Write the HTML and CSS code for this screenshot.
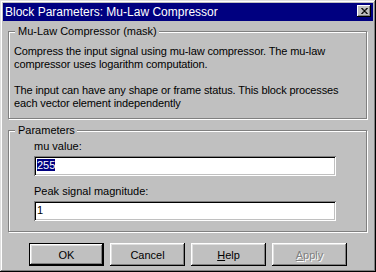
FILE: index.html
```html
<!DOCTYPE html>
<html lang="en">

<head>
    <meta charset="UTF-8">
    <title>Block Parameters: Mu-Law Compressor</title>
    <link rel="stylesheet" href="styles.css">
</head>

<body>

    <div class="window">

        <div class="titlebar">
            <span class="title">Block Parameters: Mu-Law Compressor</span>
            <span class="close-btn">
                <svg width="8" height="7" viewBox="0 0 8 7">
                    <path d="M0 0h2v1h1v1h2v-1h1v-1h2v1h-1v1h-1v1h-1v1h1v1h1v1h1v1h-2v-1h-1v-1h-2v1h-1v1h-2v-1h1v-1h1v-1h1v-1h-1v-1h-1v-1h-1z" fill="#000"/>
                </svg>
            </span>
        </div>

        <div class="content">

            <!-- mask description -->
            <fieldset class="group group-mask">
                <legend>Mu-Law Compressor (mask)</legend>
                <p>Compress the input signal using mu-law compressor. The mu-law<br>compressor uses logarithm computation.</p>
                <p>The input can have any shape or frame status. This block processes<br>each vector element independently</p>
            </fieldset>

            <!-- parameters -->
            <fieldset class="group group-params">
                <legend>Parameters</legend>
                <div class="params">
                    <div class="label">mu value:</div>
                    <div class="field"><span class="sel">255</span></div>
                    <div class="label label-second">Peak signal magnitude:</div>
                    <div class="field">1</div>
                </div>
            </fieldset>

            <div class="buttons">
                <div class="btn btn-default">OK</div>
                <div class="btn">Cancel</div>
                <div class="btn"><u>H</u>elp</div>
                <div class="btn btn-disabled"><u>A</u>pply</div>
            </div>

        </div>

    </div>

</body>

</html>
```

FILE: styles.css
```css
body {
    margin: 0;
    padding: 0;
    font-family: 'Liberation Sans', Arial, sans-serif;
    font-size: 11px;
    color: #000;
    background-color: #c0c0c0;
}

.window {
    width: 376px;
    height: 272px;
    box-sizing: border-box;
    padding: 3px;
    background-color: #c0c0c0;
    box-shadow: inset -1px -1px 0 #000, inset 1px 1px 0 #dfdfdf,
        inset -2px -2px 0 #808080, inset 2px 2px 0 #fff;
}

.titlebar {
    height: 18px;
    background-color: #000080;
    color: #fff;
    display: flex;
    align-items: center;
    justify-content: space-between;
    padding: 0 2px;
}

.title {
    font-size: 12px;
    line-height: 18px;
}

.close-btn {
    width: 14px;
    height: 12px;
    margin-bottom: 2px;
    box-sizing: border-box;
    background-color: #c0c0c0;
    display: flex;
    align-items: center;
    justify-content: center;
    box-shadow: inset -1px -1px 0 #000, inset 1px 1px 0 #fff,
        inset -2px -2px 0 #808080;
}

.close-btn svg {
    display: block;
    width: 7px;
    height: 6px;
}

.content {
    padding-top: 4px;
}

.group {
    margin: 0 6px 0 5px;
    padding: 7px 5px 8px 5px;
    border: 1px solid #808080;
    box-shadow: 1px 1px 0 #fff, inset 1px 1px 0 #fff;
    min-inline-size: 0;
}

.group legend {
    margin-left: 1px;
    padding: 0 2px 0 3px;
    line-height: 13px;
    background-color: #c0c0c0;
}

.group p {
    margin: 0;
    line-height: 13px;
    letter-spacing: -0.12px;
}

.group p + p {
    margin-top: 13px;
}

.group-params {
    margin-top: 5px;
    padding-top: 3px;
    padding-bottom: 10px;
}

.params {
    padding-left: 20px;
}

.label {
    line-height: 13px;
}

.label-second {
    margin-top: 9px;
}

.field {
    width: 302px;
    height: 20px;
    box-sizing: border-box;
    margin-top: 3px;
    padding: 3px 0 0 3px;
    background-color: #fff;
    line-height: 13px;
    box-shadow: inset 1px 1px 0 #808080, inset -1px -1px 0 #fff,
        inset 2px 2px 0 #000, inset -2px -2px 0 #c0c0c0;
}

.sel {
    background-color: #000080;
    color: #fff;
}

.buttons {
    display: flex;
    justify-content: center;
    gap: 6px;
    margin-top: 11px;
}

.btn {
    width: 75px;
    height: 23px;
    box-sizing: border-box;
    display: flex;
    align-items: center;
    justify-content: center;
    box-shadow: inset -1px -1px 0 #000, inset 1px 1px 0 #fff,
        inset -2px -2px 0 #808080, inset 2px 2px 0 #dfdfdf;
}

.btn-default {
    border: 1px solid #000;
}

.btn-disabled {
    color: #808080;
    text-shadow: 1px 1px 0 #fff;
}
```
